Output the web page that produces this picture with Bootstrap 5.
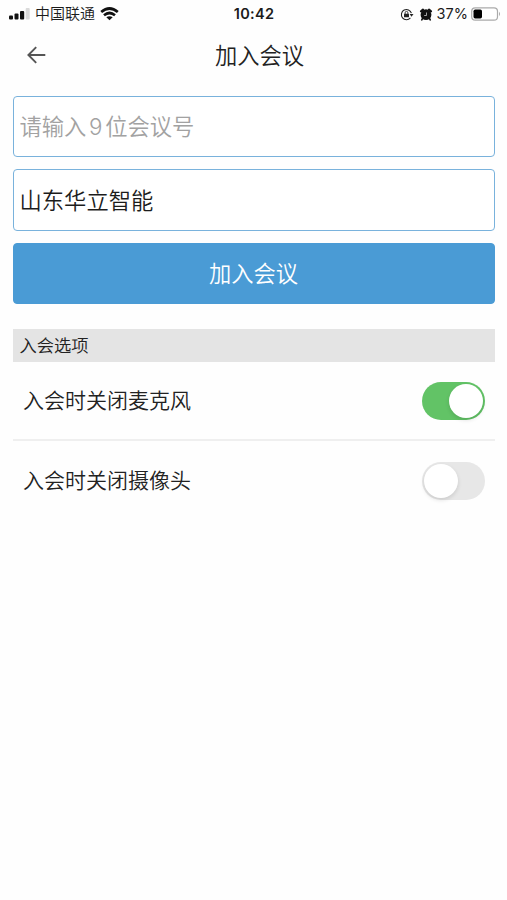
<!DOCTYPE html>
<html lang="zh-CN">
<head>
<meta charset="utf-8">
<meta name="viewport" content="width=device-width, initial-scale=1">
<title>加入会议</title>
<link href="https://cdn.jsdelivr.net/npm/bootstrap@5.3.0/dist/css/bootstrap.min.css" rel="stylesheet">
<style>
body{font-family:Inter,"Noto Sans CJK SC",sans-serif;font-weight:350;color:#222;background:#fefefe;min-height:900px}
svg{display:block;flex:none}
.status-bar{height:28px;padding:0 6px 0 9px;line-height:28px;color:#1b1b1b}
.status-side{flex:1 1 0}
.carrier{font-size:15px;margin-left:5px;margin-right:5px}
.clock{font-size:14.5px;font-weight:600;letter-spacing:.3px;margin-right:2px}
.battery-level{font-size:14.5px;font-weight:400;margin:0 3px 0 4px}
.alarm-icon{margin-left:5px}
.title-bar{height:54px;padding:0 27px}
.title-bar h1{font-size:22.3px;font-weight:350;line-height:54px;padding:1px 0 0 12px}
.side-slot{width:20px}
.page-main{padding:14px 12px 0 13px}
.join-form{gap:12px}
.join-form .form-control,.join-form .btn{height:61.4px;border-radius:4px;font-size:22.3px;font-weight:350;border:1.5px solid #79b2dc}
.join-form .form-control{padding:0 5.5px;color:#1c1c1c;background:#fff}
.join-form .form-control::placeholder{color:#a2a2a2;opacity:1;word-spacing:-3.6px}
.join-form input.name-field{padding-bottom:2px}
.join-form .btn{background:#4a9bd5;border-color:#4a9bd5;color:#fff;padding:0 1px 0 0}
.section-title{margin-top:24.5px;height:33px;line-height:33px;padding:0 7px 0 6.5px;background:#e4e4e4;font-size:17.3px;font-weight:350}
.option{height:80px;padding:1px 10px 0;font-size:21px}
.option:first-child{height:79.5px;border-bottom:2px solid #efefef}
.option:last-child{padding-top:0}
.option .form-check-input{width:63px;height:38px;margin:0;border:0;border-radius:19px;background:#e7e7e7;position:relative}
.option .form-check-input::before{content:"";position:absolute;left:2px;top:2px;width:34px;height:34px;border-radius:50%;background:#fff;box-shadow:0 2px 4px rgba(0,0,0,.12)}
.option .form-check-input:checked{background:#62c366}
.option .form-check-input:checked::before{left:27px}
</style>
</head>
<body>
<header>
<div class="status-bar d-flex align-items-center">
  <div class="status-side d-flex align-items-center">
    <svg width="21" height="12" viewBox="0 0 21 12"><g fill="#111"><rect x="0" y="7.5" width="4" height="4" rx="1"/><rect x="5.5" y="5.5" width="4" height="6" rx="1"/><rect x="11" y="3" width="4.2" height="8.5" rx="1"/></g><rect x="16.7" y="0" width="4" height="11.5" rx="1" fill="#dadada"/></svg>
    <span class="carrier">中国联通</span>
    <svg width="19" height="14" viewBox="0 0 19 14"><g fill="none" stroke="#111" stroke-width="2.7"><path d="M1.2 5Q9.5-2 17.8 5"/><path d="M4 8.2Q9.5 3.8 15 8.2"/></g><path d="M6.3 10.3Q9.5 8 12.7 10.3L9.5 13.3Z" fill="#111"/></svg>
  </div>
  <span class="clock">10:42</span>
  <div class="status-side d-flex align-items-center justify-content-end">
    <svg width="14" height="13" viewBox="0 0 14 13"><path d="M10.4 9.9A5.1 5.1 0 1 1 11.4 5.2" fill="none" stroke="#222" stroke-width="1.1"/><path d="M9.6 6h3.9l-2 2.7z" fill="#222"/><rect x="4" y="5.7" width="5" height="3.6" rx=".5" fill="#222"/><path d="M5.1 6V4.8a1.4 1.4 0 0 1 2.8 0V6" fill="none" stroke="#222" stroke-width=".9"/></svg>
    <svg class="alarm-icon" width="14" height="13" viewBox="0 0 14 13"><circle cx="7" cy="6.7" r="5.4" fill="#111"/><path d="M2 3.3L4 1.6M12 3.3L10 1.6" stroke="#111" stroke-width="2.2" stroke-linecap="round"/><path d="M3.7 10.2L2.8 11.8M10.3 10.2L11.2 11.8" stroke="#111" stroke-width="1.7" stroke-linecap="round"/><path d="M7.5 4.5V7.5H5.2" fill="none" stroke="#ccc" stroke-width=".8"/></svg>
    <span class="battery-level">37%</span>
    <svg width="30" height="14" viewBox="0 0 30 14"><rect x=".7" y=".8" width="25.8" height="12.4" rx="3.5" fill="#fff" stroke="#aaa" stroke-width="1.2"/><rect x="2.5" y="2.5" width="8.5" height="9" rx="1.7" fill="#000"/><path d="M28 4.8q2 2.2 0 4.4z" fill="#aaa"/></svg>
  </div>
</div>
<nav class="title-bar d-flex align-items-center justify-content-between">
  <a href="#" class="side-slot" aria-label="返回"><svg width="19" height="18" viewBox="0 0 19 18"><path d="M18.3 9H1.5M9.2 1.2L1.4 9l7.8 7.8" fill="none" stroke="#555" stroke-width="1.9"/></svg></a>
  <h1 class="m-0">加入会议</h1>
  <span class="side-slot"></span>
</nav>
</header>
<main class="page-main">
  <form class="join-form d-flex flex-column">
    <input class="form-control" type="text" placeholder="请输入 9 位会议号" aria-label="会议号">
    <input class="form-control name-field" type="text" value="山东华立智能" aria-label="名称">
    <button class="btn btn-primary w-100" type="button">加入会议</button>
  </form>
  <h2 class="section-title mb-0">入会选项</h2>
  <div>
    <div class="option d-flex align-items-center justify-content-between"><label for="mic">入会时关闭麦克风</label><input class="form-check-input" type="checkbox" role="switch" id="mic" checked></div>
    <div class="option d-flex align-items-center justify-content-between"><label for="cam">入会时关闭摄像头</label><input class="form-check-input" type="checkbox" role="switch" id="cam"></div>
  </div>
</main>
<script src="https://cdn.jsdelivr.net/npm/bootstrap@5.3.0/dist/js/bootstrap.bundle.min.js"></script>
</body>
</html>
